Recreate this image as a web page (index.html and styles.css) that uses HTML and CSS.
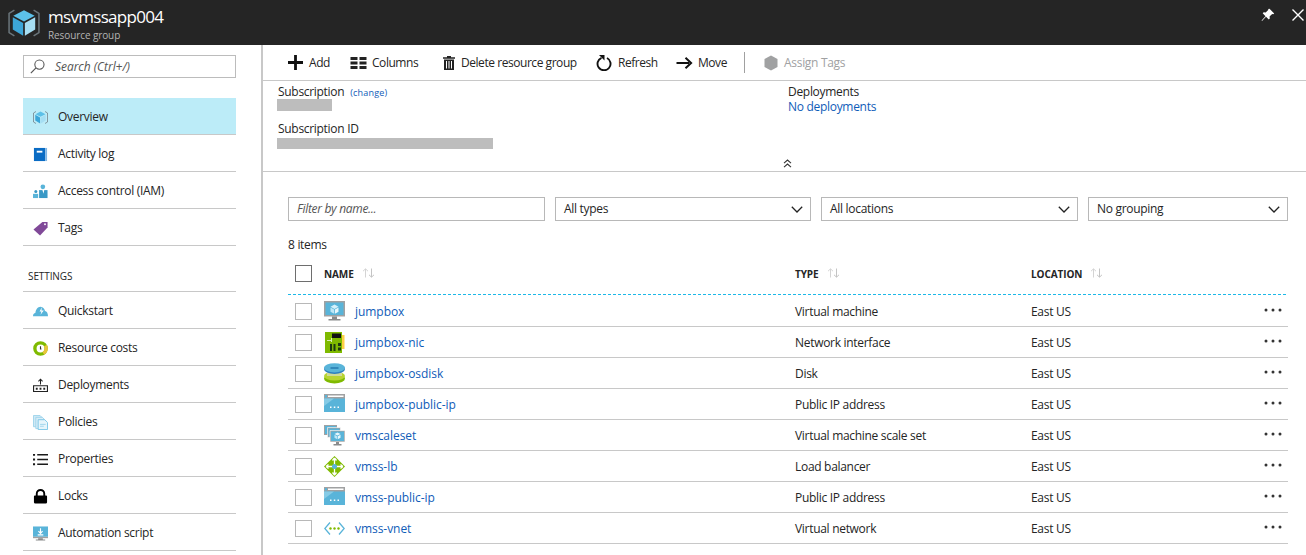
FILE: index.html
```html
<!DOCTYPE html>
<html lang="en">
<head>
<meta charset="utf-8">
<title>msvmssapp004</title>
<link rel="stylesheet" href="styles.css">
</head>
<body>
<svg class="defs" width="0" height="0" aria-hidden="true">
  <defs>
    <symbol id="i-cube" viewBox="0 0 30 26">
      <path d="M6 1 1 4v18l5 3M24 1l5 3v18l-5 3" fill="none" stroke="#6b767c" stroke-width="1.400"/>
      <path d="M15 1 5 6.300l10 5.200 10-5.200z" fill="#5cc0e8"/>
      <path d="M4.500 7.500v11.700l9.700 5.800V13z" fill="#3ca6d8"/>
      <path d="M25.500 7.500v11.700L15.800 25V13z" fill="#a6def3"/>
    </symbol>
    <symbol id="i-book" viewBox="0 0 16 16">
      <path d="M1 1h12v14H1z" fill="#0a6cc4"/><path d="M13 1h2v14h-2z" fill="#7fb5e4"/><path d="M4 4h6v2H4z" fill="#fff"/>
    </symbol>
    <symbol id="i-iam" viewBox="0 0 16 16">
      <circle cx="10.500" cy="3" r="2.500" fill="#59b4d9"/>
      <path d="M6.500 6.500h9V15h-9z" fill="#3999c6"/><path d="M10 6.500h2l-.8 4z" fill="#fff"/>
      <circle cx="3" cy="8" r="1.600" fill="#3999c6"/><path d="M0 10.500h5.500V15H0z" fill="#59b4d9"/>
    </symbol>
    <symbol id="i-tag" viewBox="0 0 16 16">
      <path d="M10 1h5.500v6l-8 8.500L.5 9z" fill="#804998"/><circle cx="12.800" cy="3.500" r="1" fill="#fff"/>
    </symbol>
    <symbol id="i-cloud" viewBox="0 0 16 16">
      <path d="M0 13c0-2 1-3 2.500-3.300C3 6 5 3 8 3c3 0 4.300 2.500 4.800 4.500C14.700 7.700 16 10 16 13z" fill="#59b4d9"/>
      <path d="M9.500 3.500 7 8h2l-1 3.500L11.500 7H9z" fill="#fff"/>
    </symbol>
    <symbol id="i-cost" viewBox="0 0 16 16">
      <circle cx="8" cy="8" r="6" fill="#fff" stroke="#7fba00" stroke-width="3.600"/>
      <path d="M8 .2A7.800 7.800 0 0 1 15.800 8h-3.600A4.200 4.200 0 0 0 8 3.800z" fill="#e8c53a" transform="rotate(60 8 8)"/>
      <path d="M8 5.500v3h1" fill="none" stroke="#333" stroke-width="1.200"/>
    </symbol>
    <symbol id="i-deploy" viewBox="0 0 16 16">
      <path d="M8 7V1.500M5.800 3.500 8 1.300l2.200 2.200" fill="none" stroke="#222" stroke-width="1.100"/>
      <path d="M.6 8.200h14.800v6.200H.6z" fill="#fff" stroke="#222" stroke-width="1.200"/>
      <path d="M3 10.500h2v2H3zM7 10.500h2v2H7zM11 10.500h2v2h-2z" fill="#222"/>
    </symbol>
    <symbol id="i-policy" viewBox="0 0 16 16">
      <path d="M.5.500h7l2 2v10h-9z" fill="#cfe9f5" stroke="#9fd4ec"/>
      <path d="M3 2.500h7l2 2v10H3z" fill="#d8eef8" stroke="#9fd4ec"/>
      <path d="M5.500 5h7l3 3v7.500h-10z" fill="#e6f5fb" stroke="#7cc5e6"/>
      <path d="M7.500 10h6M7.500 12h4" stroke="#9fd4ec"/>
    </symbol>
    <symbol id="i-props" viewBox="0 0 16 16">
      <path d="M0 2h2.200v2H0zM0 7h2.200v2H0zM0 12h2.200v2H0zM4.500 2.200H16v1.600H4.500zM4.500 7.200H16v1.600H4.500zM4.500 12.200H16v1.600H4.500z" fill="#1a1a1a"/>
    </symbol>
    <symbol id="i-lock" viewBox="0 0 16 16">
      <path d="M4 8V5a4 4 0 0 1 8 0v3" fill="none" stroke="#000" stroke-width="2"/>
      <path d="M2 7h12a1 1 0 0 1 1 1v6a1.500 1.500 0 0 1-1.500 1.500h-11A1.500 1.500 0 0 1 1 14V8a1 1 0 0 1 1-1z" fill="#000"/>
    </symbol>
    <symbol id="i-script" viewBox="0 0 16 16">
      <path d="M0 .5h16v11H0z" fill="#59b4d9"/><path d="M0 11.500h16V13H0z" fill="#a0a1a2"/>
      <path d="M5.500 13h5v1.500h2.500v1H3v-1h2.500z" fill="#8a8b8c"/>
      <path d="M8 2.500v5M5.800 5.500 8 7.800l2.200-2.300M5 9.500h6" fill="none" stroke="#fff" stroke-width="1.200"/>
    </symbol>
    <symbol id="i-vm" viewBox="0 0 21 21">
      <path d="M0 0h21v15.500H0z" fill="#a0a1a2"/><path d="M1.500 1.500h18V14h-18z" fill="#59b4d9"/>
      <path d="M10.500 3.500 6.500 5.700l4 2.200 4-2.200z" fill="#d5f0fa"/><path d="M6.500 6.500v4.300l3.600 2V8.500z" fill="#bfe7f6"/><path d="M14.500 6.500v4.300l-3.600 2V8.500z" fill="#e8f7fc"/>
      <path d="M8 15.500h5V18h3.500v1.500h-12V18H8z" fill="#8a8b8c"/>
    </symbol>
    <symbol id="i-nic" viewBox="0 0 21 21">
      <path d="M1 0h17v21H1z" fill="#7fba00"/><path d="M18 3h2.500v14H18z" fill="#ffd046"/>
      <path d="M8 1.500h9V6H8z" fill="#111"/>
      <path d="M6 12h2v7H6zM9.500 12h2v7h-2zM14 11h3v3h-3zM14 15.500h3v3h-3z" fill="#1d3b10"/>
      <path d="M3 8h5v1H3zM7 6h1v4H7z" fill="#d8eeb0"/>
    </symbol>
    <symbol id="i-disk" viewBox="0 0 21 21">
      <ellipse cx="10.500" cy="15.500" rx="10.500" ry="5" fill="#7fba00"/>
      <ellipse cx="10.500" cy="13" rx="10.500" ry="4.500" fill="#b8d432"/>
      <path d="M3 9h15v4H3z" fill="#ddd" opacity=".6"/>
      <ellipse cx="10.500" cy="6" rx="10.500" ry="5" fill="#2d7fc0"/>
      <ellipse cx="10.500" cy="4.800" rx="10.500" ry="4.600" fill="#59b4d9"/>
      <path d="M6.500 5h8" stroke="#0a5c9a" stroke-width="1"/>
    </symbol>
    <symbol id="i-ip" viewBox="0 0 21 21">
      <path d="M0 0h21v18H0z" fill="#59b4d9"/><path d="M0 0h21v4.500H0z" fill="#a0a1a2"/>
      <path d="M0 4.500h10L0 12z" fill="#86cbe6"/>
      <path d="M4 1.500h15.500v1.500H4z" fill="#fff"/><path d="M1 1h2v2.500H1z" fill="#59b4d9"/>
      <path d="M6 12.500h1.500V14H6zM9.800 12.500h1.500V14H9.800zM13.500 12.500H15V14h-1.500z" fill="#fff"/>
    </symbol>
    <symbol id="i-vmss" viewBox="0 0 21 21">
      <path d="M0 0h13v10H0z" fill="#a0a1a2"/><path d="M1 1h11v8H1z" fill="#59b4d9"/>
      <path d="M3.500 2.500h13v10h-13z" fill="#a0a1a2" stroke="#fff" stroke-width=".6"/><path d="M4.500 3.500h11v8h-11z" fill="#59b4d9"/>
      <path d="M6 5.500h15V17H6z" fill="#a0a1a2" stroke="#fff" stroke-width=".6"/><path d="M7 6.500h13V16H7z" fill="#59b4d9"/>
      <path d="M13.500 7.500 10.500 9l3 1.500 3-1.500z" fill="#e8f7fc"/><path d="M10.500 9.800v3l2.700 1.500v-3z" fill="#bfe7f6"/><path d="M16.500 9.800v3l-2.700 1.500v-3z" fill="#e8f7fc"/>
      <path d="M12 17h3v2h2.500v1.500h-8V19H12z" fill="#8a8b8c"/>
    </symbol>
    <symbol id="i-lb" viewBox="0 0 21 21">
      <path d="M10.500 0 21 10.500 10.500 21 0 10.500z" fill="#7fba00"/>
      <path d="M10.500 2v17M2 10.500h17M10.500 2 8.500 4.500M10.500 2l2 2.500M10.500 19l-2-2.500M10.500 19l2-2.500M2 10.500 4.500 8.500M2 10.500l2.500 2M19 10.500l-2.500-2M19 10.500l-2.500 2" fill="none" stroke="#fff" stroke-width="1.300"/>
      <circle cx="10.500" cy="10.500" r="2.500" fill="#59b4d9"/>
    </symbol>
    <symbol id="i-vnet" viewBox="0 0 21 21">
      <path d="M6 4.500 .8 10.500 6 16.500M15 4.500l5.200 6-5.200 6" fill="none" stroke="#59b4d9" stroke-width="1.300"/>
      <circle cx="6.500" cy="10.500" r="1.200" fill="#7fba00"/><circle cx="10.500" cy="10.500" r="1.200" fill="#7fba00"/><circle cx="14.500" cy="10.500" r="1.200" fill="#7fba00"/>
    </symbol>
    <symbol id="i-chev" viewBox="0 0 12 7">
      <path d="M.8.800 6 6 11.200.8" fill="none" stroke="#222" stroke-width="1.300"/>
    </symbol>
    <symbol id="i-sort" viewBox="0 0 13 10">
      <path d="M3.500 9.500V1M1 3.200 3.500.8 6 3.200" fill="none" stroke="#d4d4d4"/>
      <path d="M9.500.5V9M7 6.800l2.500 2.400L12 6.800" fill="none" stroke="#c4c4c4"/>
    </symbol>
    <symbol id="i-dots" viewBox="0 0 18 4">
      <circle cx="2" cy="2" r="1.500" fill="#333"/><circle cx="9" cy="2" r="1.500" fill="#333"/><circle cx="16" cy="2" r="1.500" fill="#333"/>
    </symbol>
  </defs>
</svg>

<header class="blade-header">
  <svg class="header-logo"><use href="#i-cube"/></svg>
  <div class="header-titles">
    <div class="header-title">msvmssapp004</div>
    <div class="header-sub">Resource group</div>
  </div>
  <div class="header-actions">
    <svg class="header-btn" viewBox="0 0 14 14"><path d="M8.500.8l4.700 4.700-1 .8-1-.4-2.600 2.600.2 2-1 1L5 8.700 1 13l-.4-.4L4.500 8.200 1.700 5.300l1-1 2 .2 2.700-2.700-.3-.9z" fill="#fff"/></svg>
    <svg class="header-btn" viewBox="0 0 14 14"><path d="M1.500 1.500l11 11M12.500 1.500l-11 11" stroke="#fff" stroke-width="1.400" fill="none"/></svg>
  </div>
</header>

<div class="blade">
  <aside class="sidebar">
    <div class="search">
      <svg class="search-icon" viewBox="0 0 14 14"><circle cx="8.800" cy="5.200" r="4.300" fill="none" stroke="#555"/><path d="M5.600 8.200 .8 13.200" stroke="#555" stroke-width="1.100"/></svg>
      <span>Search (Ctrl+/)</span>
    </div>
    <nav class="nav">
      <a class="nav-item active"><svg class="nav-icon"><use href="#i-cube"/></svg>Overview</a>
      <a class="nav-item"><svg class="nav-icon"><use href="#i-book"/></svg>Activity log</a>
      <a class="nav-item"><svg class="nav-icon"><use href="#i-iam"/></svg>Access control (IAM)</a>
      <a class="nav-item"><svg class="nav-icon"><use href="#i-tag"/></svg>Tags</a>
      <div class="nav-heading">SETTINGS</div>
      <a class="nav-item"><svg class="nav-icon"><use href="#i-cloud"/></svg>Quickstart</a>
      <a class="nav-item"><svg class="nav-icon"><use href="#i-cost"/></svg>Resource costs</a>
      <a class="nav-item"><svg class="nav-icon"><use href="#i-deploy"/></svg>Deployments</a>
      <a class="nav-item"><svg class="nav-icon"><use href="#i-policy"/></svg>Policies</a>
      <a class="nav-item"><svg class="nav-icon"><use href="#i-props"/></svg>Properties</a>
      <a class="nav-item"><svg class="nav-icon"><use href="#i-lock"/></svg>Locks</a>
      <a class="nav-item"><svg class="nav-icon"><use href="#i-script"/></svg>Automation script</a>
    </nav>
  </aside>

  <main class="main">
    <div class="toolbar">
      <button class="tool tool-add"><svg class="tool-icon" viewBox="0 0 16 16"><path d="M6.500 0h3v6.500H16v3H9.500V16h-3V9.500H0v-3h6.500z" fill="#111"/></svg>Add</button>
      <button class="tool tool-cols"><svg class="tool-icon" viewBox="0 0 16 12"><path d="M0 0h7v3H0zM9 0h7v3H9zM0 4.500h7v3H0zM9 4.500h7v3H9zM0 9h7v3H0zM9 9h7v3H9z" fill="#222"/></svg>Columns</button>
      <button class="tool tool-del"><svg class="tool-icon" viewBox="0 0 12 14"><path d="M4 0h4v1.300h4v1.400H0V1.300h4zM1 3.500h10V14H1zM3 5v7.500h1V5zM5.500 5v7.500h1V5zM8 5v7.500h1V5z" fill="#222" fill-rule="evenodd"/></svg>Delete resource group</button>
      <button class="tool tool-ref"><svg class="tool-icon" viewBox="0 0 16 16"><path d="M5.500 3.300a6.500 6.500 0 1 0 5.500.2" fill="none" stroke="#111" stroke-width="1.900"/><path d="M3 .5h5.500V6z" fill="#111"/></svg>Refresh</button>
      <button class="tool tool-move"><svg class="tool-icon" viewBox="0 0 16 12"><path d="M0 5h12.500v2H0z" fill="#111"/><path d="M9 .8 14.600 6 9 11.200" fill="none" stroke="#111" stroke-width="2"/></svg>Move</button>
      <span class="tool-sep"></span>
      <button class="tool tool-tags"><svg class="tool-icon" viewBox="0 0 14 16"><path d="M7 .5 13.500 4v8L7 15.500.5 12V4z" fill="#a0a1a2"/></svg>Assign Tags</button>
    </div>

    <section class="essentials">
      <div class="ess-col ess-left">
        <div class="ess-label">Subscription <a class="change">(change)</a></div>
        <div class="redact redact-a"></div>
        <div class="ess-label ess-id">Subscription ID</div>
        <div class="redact redact-b"></div>
      </div>
      <div class="ess-col ess-right">
        <div class="ess-label">Deployments</div>
        <a class="link">No deployments</a>
      </div>
      <svg class="collapse" viewBox="0 0 9 9"><path d="M1 4.200 4.500 1 8 4.200M1 8.200 4.500 5 8 8.200" fill="none" stroke="#333" stroke-width="1.100"/></svg>
    </section>

    <section class="resources">
      <div class="filters">
        <div class="field field-name">Filter by name...</div>
        <div class="field select sel-type"><span>All types</span><svg class="chev"><use href="#i-chev"/></svg></div>
        <div class="field select sel-loc"><span>All locations</span><svg class="chev"><use href="#i-chev"/></svg></div>
        <div class="field select sel-group"><span>No grouping</span><svg class="chev"><use href="#i-chev"/></svg></div>
      </div>
      <div class="count">8 items</div>

      <div class="row head">
        <span class="check check-head"></span>
        <span class="c-name head-name">NAME<svg class="sort"><use href="#i-sort"/></svg></span>
        <span class="c-type">TYPE<svg class="sort"><use href="#i-sort"/></svg></span>
        <span class="c-loc">LOCATION<svg class="sort"><use href="#i-sort"/></svg></span>
      </div>

      <div class="row"><span class="check"></span><svg class="res-icon"><use href="#i-vm"/></svg><a class="c-link">jumpbox</a><span class="c-type">Virtual machine</span><span class="c-loc">East US</span><svg class="dots"><use href="#i-dots"/></svg></div>
      <div class="row"><span class="check"></span><svg class="res-icon"><use href="#i-nic"/></svg><a class="c-link">jumpbox-nic</a><span class="c-type">Network interface</span><span class="c-loc">East US</span><svg class="dots"><use href="#i-dots"/></svg></div>
      <div class="row"><span class="check"></span><svg class="res-icon"><use href="#i-disk"/></svg><a class="c-link">jumpbox-osdisk</a><span class="c-type">Disk</span><span class="c-loc">East US</span><svg class="dots"><use href="#i-dots"/></svg></div>
      <div class="row"><span class="check"></span><svg class="res-icon"><use href="#i-ip"/></svg><a class="c-link">jumpbox-public-ip</a><span class="c-type">Public IP address</span><span class="c-loc">East US</span><svg class="dots"><use href="#i-dots"/></svg></div>
      <div class="row"><span class="check"></span><svg class="res-icon"><use href="#i-vmss"/></svg><a class="c-link">vmscaleset</a><span class="c-type">Virtual machine scale set</span><span class="c-loc">East US</span><svg class="dots"><use href="#i-dots"/></svg></div>
      <div class="row"><span class="check"></span><svg class="res-icon"><use href="#i-lb"/></svg><a class="c-link">vmss-lb</a><span class="c-type">Load balancer</span><span class="c-loc">East US</span><svg class="dots"><use href="#i-dots"/></svg></div>
      <div class="row"><span class="check"></span><svg class="res-icon"><use href="#i-ip"/></svg><a class="c-link">vmss-public-ip</a><span class="c-type">Public IP address</span><span class="c-loc">East US</span><svg class="dots"><use href="#i-dots"/></svg></div>
      <div class="row"><span class="check"></span><svg class="res-icon"><use href="#i-vnet"/></svg><a class="c-link">vmss-vnet</a><span class="c-type">Virtual network</span><span class="c-loc">East US</span><svg class="dots"><use href="#i-dots"/></svg></div>
    </section>
  </main>
</div>
</body>
</html>
```

FILE: styles.css
```css
* { box-sizing: border-box; }
html, body { margin: 0; height: 555px; overflow: hidden; background: #fff; }
body { font: 12px/16px "Open Sans", "Noto Sans", sans-serif; letter-spacing: -0.3px; color: #252525; }
.defs { display: block; height: 0; }

.blade-header { height: 45px; background: #252525; display: flex; align-items: flex-start; padding: 8px 1px 0 8px; color: #fff; }
.header-logo { width: 32px; height: 28px; flex: none; margin-top: 1px; }
.header-titles { margin-left: 8px; margin-top: -1px; }
.header-title { font-size: 17px; line-height: 20px; letter-spacing: -0.7px; color: #fff; }
.header-sub { font-size: 10px; line-height: 14px; margin-top: 1px; color: #b4b4b4; letter-spacing: -0.1px; }
.header-actions { margin-left: auto; display: flex; gap: 16px; }
.header-btn { width: 14px; height: 14px; flex: none; }

.blade { display: flex; height: 510px; }
.sidebar { width: 263px; flex: none; border-right: 2px solid #c8c8c8; padding: 10px 25px 0 23px; }
.search { height: 23px; border: 1px solid #bcbcbc; display: flex; align-items: center; padding-left: 6px; font-style: italic; color: #555; letter-spacing: -0.05px; }
.search-icon { width: 15px; height: 15px; margin-right: 10px; flex: none; }
.nav { margin-top: 20px; display: flex; flex-direction: column; }
.nav-item { height: 37px; display: flex; align-items: center; padding: 2px 0 0 10px; border-bottom: 1px solid #c8c8c8; color: #252525; }
.nav-item.active { background: #bcecf8; }
.nav-icon { width: 15px; height: 15px; margin-right: 10px; flex: none; }
.nav-heading { height: 46px; display: flex; align-items: flex-end; padding: 0 0 7px 5px; font-size: 10px; border-bottom: 1px solid #c8c8c8; letter-spacing: -0.1px; }

.main { flex: 1; min-width: 0; }
.toolbar { height: 36px; border-bottom: 1px solid #c8c8c8; display: flex; align-items: center; padding-left: 25px; }
.tool { border: 0; background: none; padding: 0; font: inherit; letter-spacing: -0.45px; color: #252525; display: flex; align-items: center; height: 20px; }
.tool-icon { flex: none; margin-right: 6px; }
.tool-add { width: 62px; } .tool-add .tool-icon { width: 15px; height: 15px; }
.tool-cols { width: 93px; } .tool-cols .tool-icon { width: 17px; height: 12px; margin-right: 5px; }
.tool-del { width: 153px; } .tool-del .tool-icon { width: 12px; height: 14px; }
.tool-ref { width: 80px; } .tool-ref .tool-icon { width: 16px; height: 17px; }
.tool-move { width: 68px; } .tool-move .tool-icon { width: 17px; height: 12px; margin-right: 5px; }
.tool-sep { width: 1px; height: 21px; background: #a0a0a0; margin-right: 19px; }
.tool-tags { color: #a0a1a2; letter-spacing: -0.3px; } .tool-tags .tool-icon { width: 14px; height: 16px; }

.essentials { height: 91px; border-bottom: 1px solid #c8c8c8; display: flex; position: relative; padding: 3px 0 0 14px; }
.ess-col { display: flex; flex-direction: column; align-items: flex-start; }
.ess-left { width: 511px; }
.ess-left .ess-label { padding-left: 1px; }
.ess-label { line-height: 16px; }
.change { font-size: 9px; color: #0f5cb8; margin-left: 3px; letter-spacing: 0.2px; }
.redact { background: #bdbdbd; }
.redact-a { width: 55px; height: 12px; margin-top: -2px; }
.redact-b { width: 216px; height: 11px; margin-top: 1px; }
.ess-left .ess-id { margin-top: 10px; }
.link { color: #0f5cb8; line-height: 15px; margin-top: -1px; }
.collapse { position: absolute; left: 520px; top: 78px; width: 9px; height: 9px; }

.resources { padding: 25px 18px 0 25px; }
.filters { display: flex; height: 24px; }
.field { height: 24px; border: 1px solid #b8b8b8; display: flex; align-items: center; padding-left: 8px; }
.field-name { width: 257px; margin-right: 10px; font-style: italic; color: #555; }
.select { justify-content: space-between; padding-right: 7px; }
.sel-type { width: 256px; margin-right: 10px; }
.sel-loc { width: 257px; margin-right: 10px; }
.sel-group { width: 200px; }
.chev { width: 12px; height: 7px; flex: none; }
.count { margin-top: 16px; line-height: 16px; }

.row { height: 31px; display: flex; align-items: center; border-bottom: 1px solid #c8c8c8; position: relative; color: #252525; }
.row > a, .row > span.c-type, .row > span.c-loc { margin-top: 2px; }
.row.head { height: 38px; margin: 4px 0 1px; border-bottom: 0; background: repeating-linear-gradient(90deg, #1cb8e8 0 3px, transparent 3px 5px) bottom / 100% 1px no-repeat; font-size: 10px; font-weight: 700; letter-spacing: -0.1px; padding-bottom: 5px; }
.row.head > span { margin-top: 0; }
.check { width: 17px; height: 17px; border: 1px solid #b8b8b8; margin-left: 7px; flex: none; }
.check-head { border-color: #6e6e6e; }
.head-name { margin-left: 12px; width: 471px; }
.res-icon { width: 21px; height: 21px; margin-left: 12px; flex: none; }
.c-link { color: #0f5cb8; width: 440px; margin-left: 10px; flex: none; letter-spacing: -0.05px; }
.c-type { width: 236px; flex: none; }
.c-loc { flex: none; }
.sort { width: 13px; height: 10px; margin-left: 8px; vertical-align: 0; }
.dots { width: 18px; height: 4px; margin-left: auto; margin-right: 6px; margin-top: -2px; flex: none; }
```
